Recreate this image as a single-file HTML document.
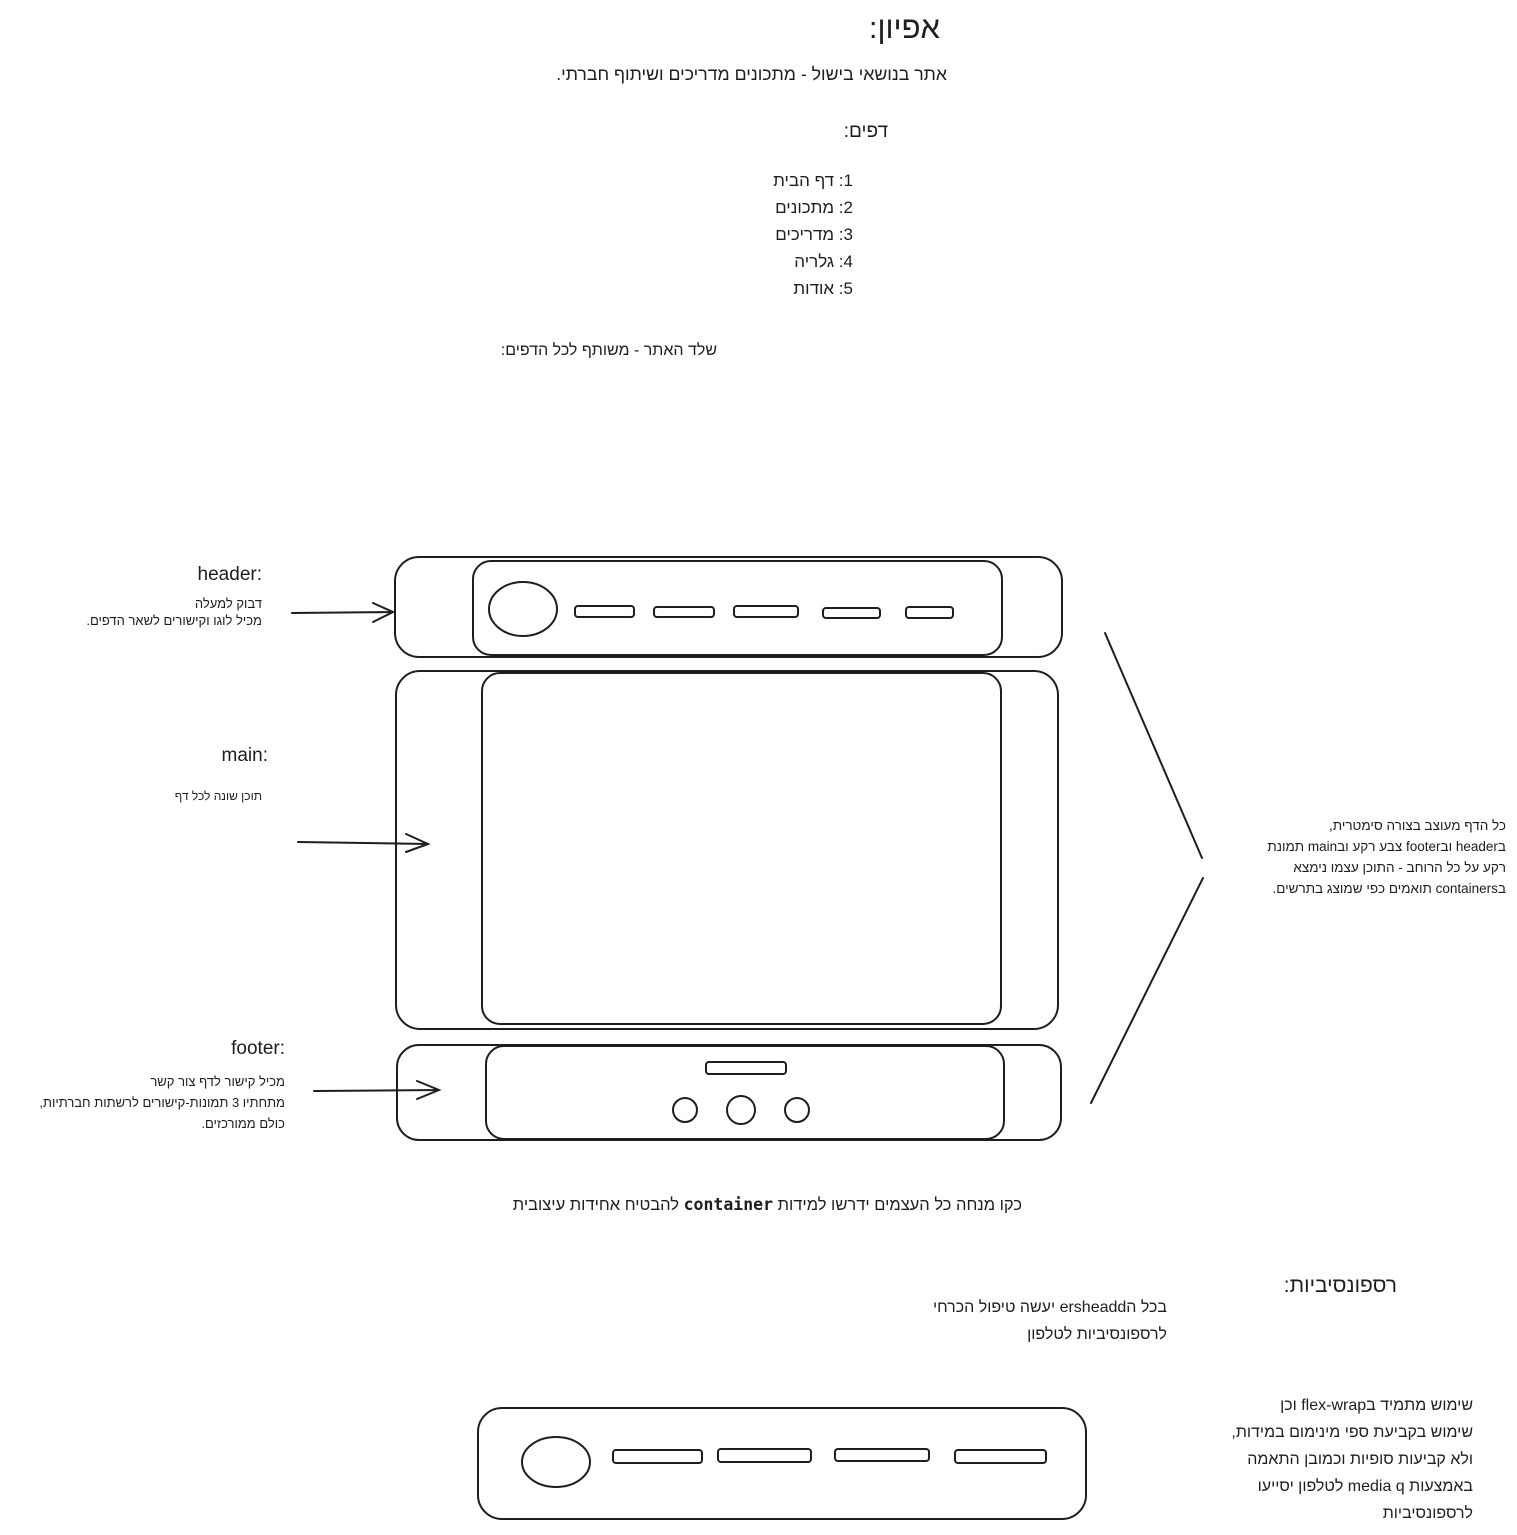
<!DOCTYPE html>
<html lang="he"><head><meta charset="utf-8">
<style>
html,body{margin:0;padding:0;background:#fff;}
body{width:1517px;height:1535px;position:relative;overflow:hidden;font-family:"Liberation Sans","DejaVu Sans",sans-serif;color:#1e1e1e;}
.t{position:absolute;direction:rtl;text-align:right;white-space:nowrap;}
.l{direction:ltr;}
svg{position:absolute;left:0;top:0;}
</style></head><body>
<svg width="1517" height="1535" fill="none" stroke="#1e1e1e" stroke-width="2" stroke-linecap="round">
<rect x="395" y="557" width="667" height="100" rx="24"/>
<rect x="473" y="561" width="529" height="94" rx="18"/>
<ellipse cx="523" cy="609" rx="34" ry="27"/>
<rect x="575" y="606" width="59" height="11" rx="3"/>
<rect x="654" y="607" width="60" height="10" rx="3"/>
<rect x="734" y="606" width="64" height="11" rx="3"/>
<rect x="823" y="608" width="57" height="10" rx="3"/>
<rect x="906" y="607" width="47" height="11" rx="3"/>
<rect x="396" y="671" width="662" height="358" rx="24"/>
<rect x="482" y="673" width="519" height="351" rx="18"/>
<rect x="397" y="1045" width="664" height="95" rx="22"/>
<rect x="486" y="1046" width="518" height="93" rx="18"/>
<rect x="706" y="1062" width="80" height="12" rx="3"/>
<circle cx="685" cy="1110" r="12"/>
<circle cx="741" cy="1110" r="14"/>
<circle cx="797" cy="1110" r="12"/>
<path d="M292 613 L393 612 M373 603 L393 612 L373 622"/>
<path d="M298 842 L428 844 M406 834 L428 844 L406 852"/>
<path d="M314 1091 L439 1090 M417 1081 L439 1090 L417 1099"/>
<path d="M1105 633 L1202 858"/>
<path d="M1203 878 L1091 1103"/>
<rect x="478" y="1408" width="608" height="111" rx="24"/>
<ellipse cx="556" cy="1462" rx="34" ry="25"/>
<rect x="613" y="1450" width="89" height="13" rx="3"/>
<rect x="718" y="1449" width="93" height="13" rx="3"/>
<rect x="835" y="1449" width="94" height="12" rx="3"/>
<rect x="955" y="1450" width="91" height="13" rx="3"/>
</svg>

<div class="t" style="right:577px;top:10px;font-size:31px;">אפיון:</div>
<div class="t" style="right:570px;top:64px;font-size:17.7px;">אתר בנושאי בישול - מתכונים מדריכים ושיתוף חברתי.</div>
<div class="t" style="right:629px;top:121px;font-size:19px;">דפים:</div>
<div class="t" style="right:664px;top:167px;font-size:17px;line-height:27px;">1: דף הבית<br>2: מתכונים<br>3: מדריכים<br>4: גלריה<br>5: אודות</div>
<div class="t" style="right:800px;top:342px;font-size:16px;">שלד האתר - משותף לכל הדפים:</div>

<div class="t l" style="right:1255px;top:564px;font-size:19px;">header:</div>
<div class="t" style="right:1255px;top:595px;font-size:13px;line-height:17px;">דבוק למעלה<br>מכיל לוגו וקישורים לשאר הדפים.</div>
<div class="t l" style="right:1249px;top:745px;font-size:19px;">main:</div>
<div class="t" style="right:1255px;top:789px;font-size:12px;">תוכן שונה לכל דף</div>
<div class="t l" style="right:1232px;top:1038px;font-size:19px;">footer:</div>
<div class="t" style="right:1232px;top:1071px;font-size:13px;line-height:21px;">מכיל קישור לדף צור קשר<br>מתחתיו 3 תמונות-קישורים לרשתות חברתיות,<br>כולם ממורכזים.</div>

<div class="t" style="right:11px;top:815px;font-size:13.5px;line-height:21px;">כל הדף מעוצב בצורה סימטרית,<br>בheader ובfooter צבע רקע ובmain תמונת<br>רקע על כל הרוחב - התוכן עצמו נימצא<br>בcontainers תואמים כפי שמוצג בתרשים.</div>

<div class="t" style="right:495px;top:1195px;font-size:16.5px;">כקו מנחה כל העצמים ידרשו למידות <b style="font-family:'DejaVu Sans Mono',monospace;">container</b> להבטיח אחידות עיצובית</div>

<div class="t" style="right:120px;top:1274px;font-size:21px;">רספונסיביות:</div>
<div class="t" style="right:350px;top:1294px;font-size:16px;line-height:27px;">בכל הersheadd יעשה טיפול הכרחי<br>לרספונסיביות לטלפון</div>
<div class="t" style="right:44px;top:1392px;font-size:16px;line-height:27px;">שימוש מתמיד בflex-wrap וכן<br>שימוש בקביעת ספי מינימום במידות,<br>ולא קביעות סופיות וכמובן התאמה<br>באמצעות media q לטלפון יסייעו<br>לרספונסיביות</div>
</body></html>
